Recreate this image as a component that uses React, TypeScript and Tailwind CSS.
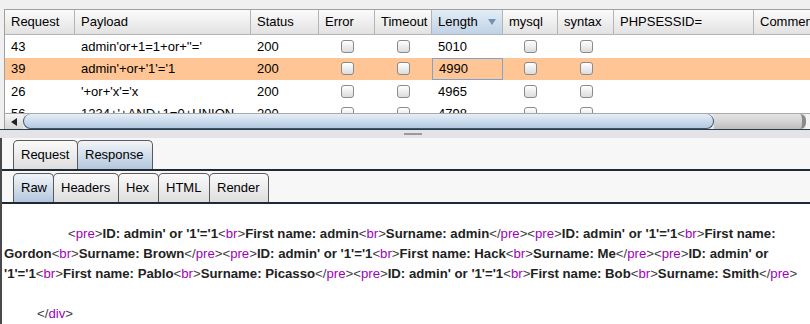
import React from "react";

type Col = { label: string; w: number; check?: boolean; sorted?: boolean };

const cols: Col[] = [
  { label: "Request", w: 70 },
  { label: "Payload", w: 176 },
  { label: "Status", w: 68 },
  { label: "Error", w: 56, check: true },
  { label: "Timeout", w: 57, check: true },
  { label: "Length", w: 71, sorted: true },
  { label: "mysql", w: 55, check: true },
  { label: "syntax", w: 56, check: true },
  { label: "PHPSESSID=", w: 140 },
  { label: "Comment", w: 100 },
];

const rows = [
  { id: "43", payload: "admin'or+1=1+or+''='", status: "200", length: "5010" },
  { id: "39", payload: "admin'+or+'1'='1", status: "200", length: "4990", selected: true },
  { id: "26", payload: "'+or+'x'='x", status: "200", length: "4965" },
  { id: "56", payload: "1234+'+AND+1=0+UNION", status: "200", length: "4798" },
];

const lines = [
  { indent: 64, text: "<pre>ID: admin' or '1'='1<br>First name: admin<br>Surname: admin</pre><pre>ID: admin' or '1'='1<br>First name:" },
  { indent: 0, text: "Gordon<br>Surname: Brown</pre><pre>ID: admin' or '1'='1<br>First name: Hack<br>Surname: Me</pre><pre>ID: admin' or" },
  { indent: 0, text: "'1'='1<br>First name: Pablo<br>Surname: Picasso</pre><pre>ID: admin' or '1'='1<br>First name: Bob<br>Surname: Smith</pre>" },
  { indent: 0, text: "" },
  { indent: 33, text: "</div>" },
];

function Checkbox() {
  return (
    <div className="w-[13px] h-[13px] rounded-[3px] border border-[#8a8a8a] bg-gradient-to-b from-[#ffffff] to-[#dcdcdc]" />
  );
}

// split html-ish line into tag / text pieces
function Markup({ text }: { text: string }) {
  const parts = text.split(/(<[^>]+>)/).filter(Boolean);
  return (
    <>
      {parts.map((p, i) =>
        p.startsWith("<") ? (
          <span key={i} className="font-normal text-[#404040]">
            {"<"}
            {p.startsWith("</") && "/"}
            <span className="text-[#a000b8]">{p.replace(/[<>/]/g, "")}</span>
            {">"}
          </span>
        ) : (
          <span key={i} className="font-bold text-[#222]">{p}</span>
        )
      )}
    </>
  );
}

function Tab({ label, active, w }: { label: string; active?: boolean; w: number }) {
  return (
    <div
      style={{ width: w }}
      className={
        "h-full rounded-t-[5px] border border-b-0 border-[#5a5a5a] flex items-center pl-[7px] text-[13px] text-black -ml-px first:ml-0 " +
        (active
          ? "bg-gradient-to-b from-[#f2f5f9] to-[#b3c7dc]"
          : "bg-gradient-to-b from-[#fafafa] to-[#dedede]")
      }
    >
      {label}
    </div>
  );
}

function TabLine() {
  return (
    <div className="h-[4px] border-t border-b border-[#1e2a36] bg-[#c5d5e6]" />
  );
}

export default function App() {
  return (
    <div
      className="w-[810px] h-[324px] overflow-hidden bg-[#f0f0f0] flex flex-col"
      style={{ fontFamily: '"Liberation Sans", Arial, sans-serif' }}
    >
      {/* results table */}
      <div className="pt-[9px] pl-[4px] shrink-0">
        <div className="border-t border-l border-[#a0a0a0] w-[900px]">
          <div className="flex h-[25px]">
            {cols.map((c) => (
              <div
                key={c.label}
                style={{ width: c.w }}
                className={
                  "shrink-0 border-r border-b border-[#b4b4b4] flex items-center px-[6px] text-[13px] text-black relative " +
                  (c.sorted
                    ? "bg-gradient-to-b from-[#e3edf7] to-[#bfd2e5]"
                    : "bg-gradient-to-b from-[#fbfbfb] to-[#e2e2e2]")
                }
              >
                {c.label}
                {c.sorted && (
                  <span className="absolute right-[6px] top-[9px] w-0 h-0 border-l-[4px] border-r-[4px] border-t-[6px] border-l-transparent border-r-transparent border-t-[#6f92b8]" />
                )}
              </div>
            ))}
          </div>
          <div className="h-[78px] overflow-hidden bg-white">
            {rows.map((r) => (
              <div
                key={r.id}
                className={"flex h-[22.5px] text-[13px] text-black " + (r.selected ? "bg-[#ffc594]" : "")}
              >
                {cols.map((c, i) => {
                  let content: React.ReactNode = null;
                  if (i === 0) content = r.id;
                  if (i === 1) content = r.payload;
                  if (i === 2) content = r.status;
                  if (i === 5) content = r.length;
                  return (
                    <div
                      key={c.label}
                      style={{ width: c.w }}
                      className={
                        "shrink-0 flex items-center whitespace-nowrap overflow-hidden " +
                        (c.check ? "justify-center" : "px-[6px]") +
                        (i === 5 && r.selected ? " border border-[#7fa3cc] px-[5px]" : "")
                      }
                    >
                      {c.check ? <Checkbox /> : content}
                    </div>
                  );
                })}
              </div>
            ))}
          </div>
          {/* horizontal scrollbar */}
          <div className="flex h-[16px] border-t border-[#a9a9a9] bg-[#e9e9e9]">
            <div className="w-[18px] shrink-0 flex items-center justify-center bg-gradient-to-b from-[#f6f6f6] to-[#d6d6d6]">
              <span className="w-0 h-0 border-t-[4px] border-b-[4px] border-r-[6px] border-t-transparent border-b-transparent border-r-[#222]" />
            </div>
            <div className="w-[691px] shrink-0 rounded-[9px] border-b border-r border-l border-[#3d5670] bg-gradient-to-b from-[#e6eff8] to-[#b2c9df]" />
            <div className="w-[92px] shrink-0 rounded-r-[6px] bg-gradient-to-b from-[#e4e4e4] via-[#d4d4d4] to-[#bdbdbd] border-r-[4px] border-[#8a8a8a]" />
            <div className="flex-1 bg-[#f4f4f4]" />
          </div>
        </div>
      </div>

      {/* splitter */}
      <div className="h-[9px] shrink-0 bg-[#e4e4e8] border-t border-[#2b3a4a] flex justify-center pt-[3px]">
        <div className="w-[18px] h-[2px] bg-[#9a9a9a] ml-[16px]" />
      </div>

      {/* message editor */}
      <div className="flex-1 bg-[#f7f7f7] border-l-2 border-[#4a4a4a] flex flex-col min-h-0">
        <div className="h-[29px] shrink-0 mt-[2px] flex pl-[11px]">
          <Tab label="Request" w={65} />
          <Tab label="Response" active w={76} />
        </div>
        <TabLine />
        <div className="h-[29px] shrink-0 mt-[2px] flex pl-[11px]">
          <Tab label="Raw" active w={41} />
          <Tab label="Headers" w={66} />
          <Tab label="Hex" w={41} />
          <Tab label="HTML" w={52} />
          <Tab label="Render" w={60} />
        </div>
        <TabLine />
        <div className="flex-1 bg-white pt-[20px] pl-[2px] text-[13.2px] leading-[20px]">
          {lines.map((l, i) => (
            <div key={i} className="h-[20px] whitespace-nowrap" style={{ paddingLeft: l.indent }}>
              <Markup text={l.text} />
            </div>
          ))}
        </div>
      </div>
    </div>
  );
}
